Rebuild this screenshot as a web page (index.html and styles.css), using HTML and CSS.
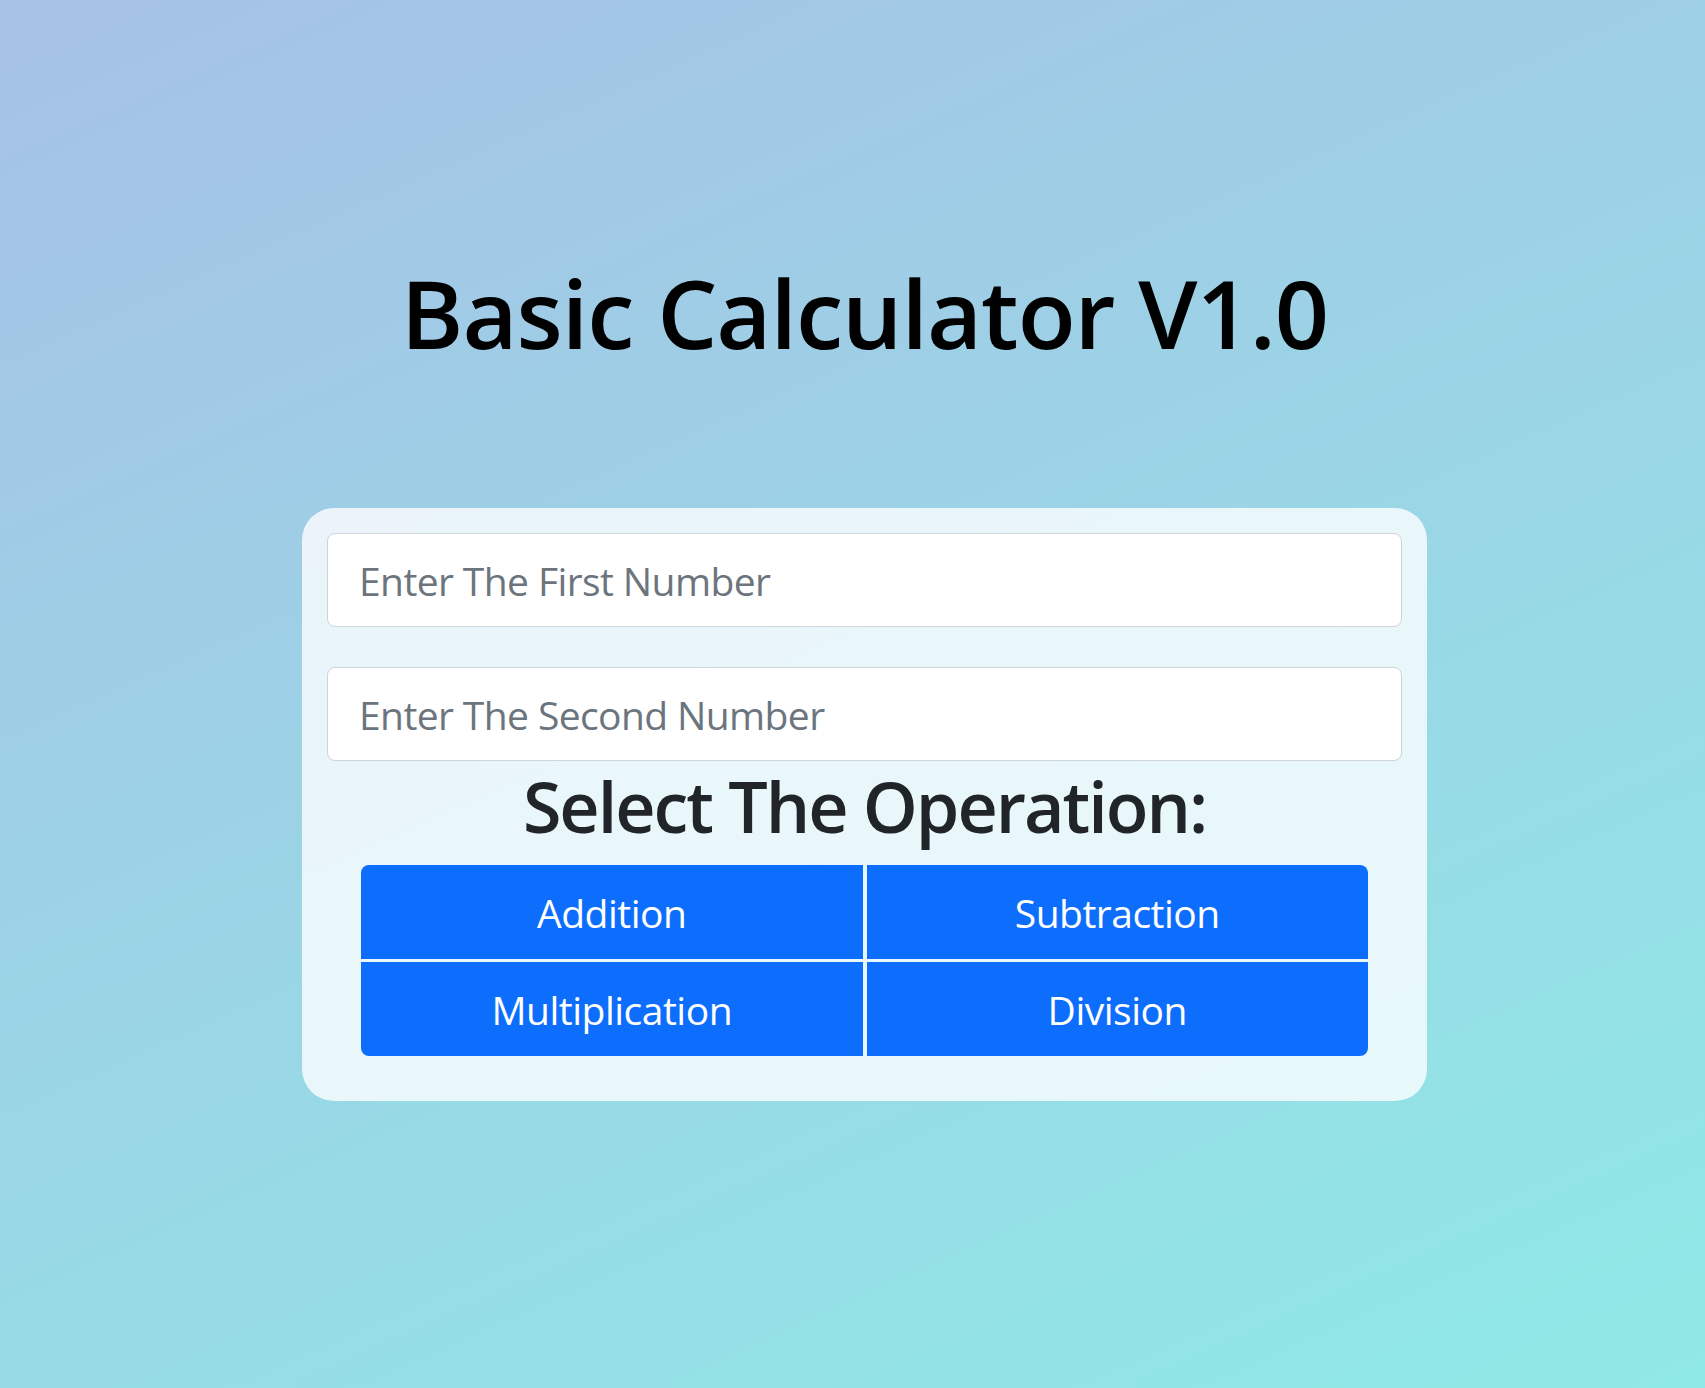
FILE: index.html
```html
<!DOCTYPE html>
<html lang="en">
<head>
<meta charset="utf-8">
<title>Basic Calculator V1.0</title>
<link rel="stylesheet" href="styles.css">
</head>
<body>
<main class="page">
  <h1 class="title">Basic Calculator V1.0</h1>
  <section class="card">
    <input class="field" type="text" placeholder="Enter The First Number">
    <input class="field field-second" type="text" placeholder="Enter The Second Number">
    <h2 class="op-title">Select The Operation:</h2>
    <div class="ops">
      <button class="op op-tl">Addition</button>
      <button class="op op-tr">Subtraction</button>
      <button class="op op-bl">Multiplication</button>
      <button class="op op-br">Division</button>
    </div>
  </section>
</main>
</body>
</html>
```

FILE: styles.css
```css
html, body {
  margin: 0;
  padding: 0;
  height: 100%;
}

body {
  background: linear-gradient(156deg, #a6c1e6 0%, #8fe9e6 100%);
  font-family: "Open Sans", "Noto Sans", sans-serif;
  min-height: 100vh;
}

.page {
  display: flex;
  flex-direction: column;
  align-items: center;
  padding-left: 24px;
  padding-top: 255px;
  box-sizing: border-box;
}

.title {
  margin: 0;
  font-size: 95px;
  line-height: 114px;
  font-weight: 600;
  letter-spacing: -1px;
  color: #000;
}

.card {
  margin-top: 139px;
  width: 1125px;
  box-sizing: border-box;
  padding: 25px 25px 45px;
  background: rgba(255, 255, 255, 0.78);
  border-radius: 32px;
  display: flex;
  flex-direction: column;
}

.field {
  box-sizing: border-box;
  width: 100%;
  height: 94px;
  padding: 0 31px;
  border: 1px solid #ced4da;
  border-radius: 8px;
  background: #fff;
  font-family: inherit;
  font-size: 39px;
  letter-spacing: -0.6px;
  color: #212529;
  outline: none;
}

.field::placeholder {
  color: #6c757d;
}

.field-second {
  margin-top: 40px;
}

.op-title {
  margin: 3px 0 0;
  text-align: center;
  font-size: 70px;
  line-height: 84px;
  font-weight: 600;
  letter-spacing: -2px;
  color: #212529;
}

.ops {
  margin: 17px 34px 0;
  display: grid;
  grid-template-columns: 1fr 1fr;
  column-gap: 4px;
  row-gap: 3px;
}

.op {
  height: 94px;
  border: none;
  background: #0d6efd;
  color: #fff;
  font-family: inherit;
  font-size: 39px;
  letter-spacing: -0.5px;
  padding: 0;
  cursor: pointer;
}

.op-tl { border-top-left-radius: 8px; }
.op-tr { border-top-right-radius: 8px; }
.op-bl { border-bottom-left-radius: 8px; }
.op-br { border-bottom-right-radius: 8px; }
```
